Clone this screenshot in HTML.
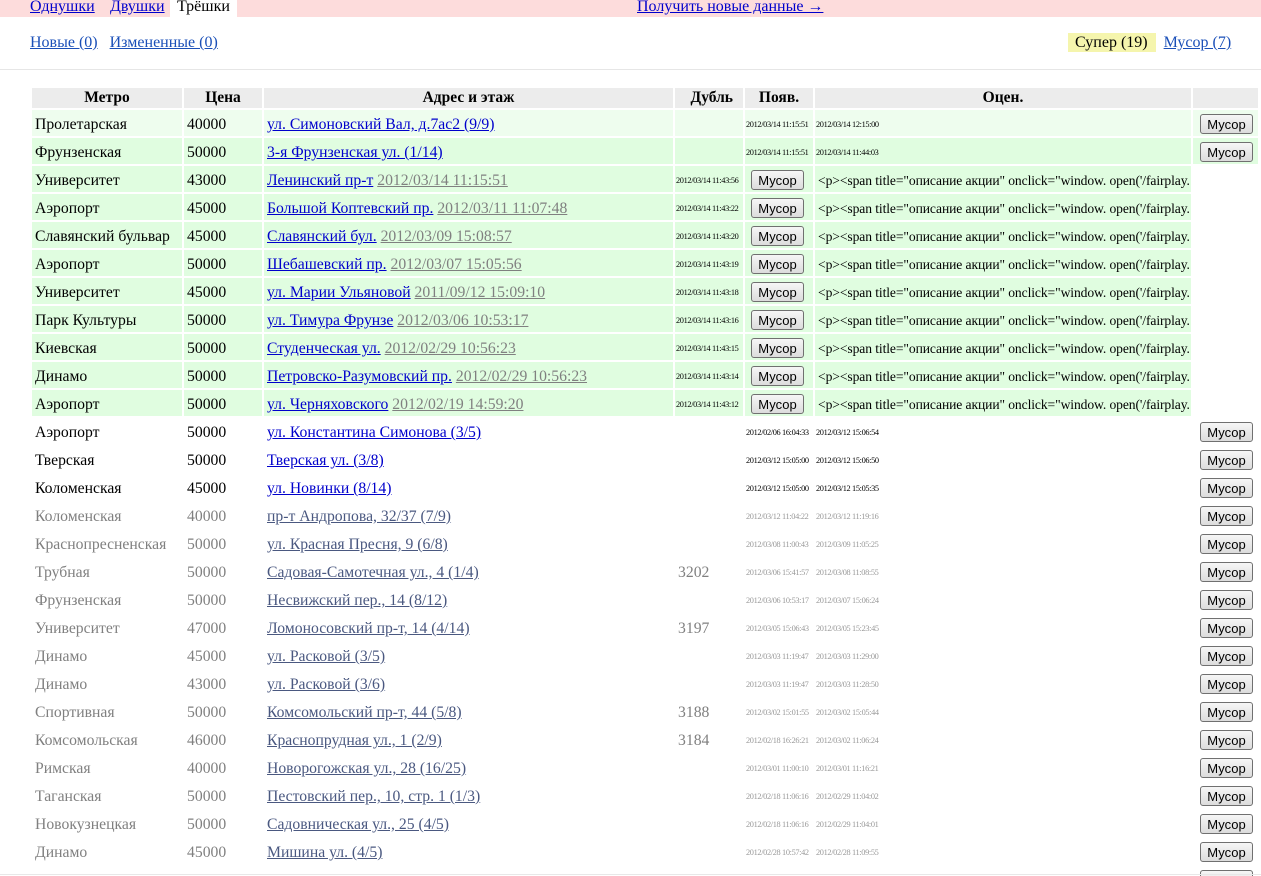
<!DOCTYPE html>
<html><head><meta charset="utf-8">
<style>
*{box-sizing:border-box}
html,body{margin:0;width:1261px;height:876px;overflow:hidden}
body{font-family:"Liberation Serif","DejaVu Serif",serif;font-size:15.7px;color:#000;background:#fff;position:relative}
a{color:#0000cc}
.top{position:absolute;left:0;top:0;width:1261px;height:17px;background:#fddcdc}
.top a,.top span{position:absolute;top:-2px;font-size:16px;line-height:18px}
.tab{background:#fff;height:17px;padding:0 7px}
.sub{position:absolute;top:34px;font-size:16px;line-height:18px}
.sub a{color:#1a4fb8}
.hr{position:absolute;left:0;top:69px;width:1261px;height:1px;background:#e6e6e6}
table{position:absolute;left:30px;top:86px;border-spacing:2px;table-layout:fixed;width:1230px;border-collapse:separate}
th{background:#ececec;height:20px;font-weight:bold;font-size:15.5px;padding:0;line-height:20px}
td{height:26px;padding:4px 3px 0;white-space:nowrap;overflow:hidden;line-height:22px}
tr.g1 td{background:#eefdee}
tr.g td{background:#e0fde0}
tr.g td.n{background:#fff}
.sm{font-size:8.3px;letter-spacing:-0.35px;padding:4px 1px 0}
.dt{color:#808080}
tr.gr td{color:#808080}
tr.gr a{color:#4a5880}
tr.gr .sm{color:#999}
button{font-family:"Liberation Sans",Arial,sans-serif;font-size:13px;height:20px;width:53px;padding:0;border:1px solid #707070;border-radius:3px;background:linear-gradient(#f6f6f6,#dcdcdc);color:#000;vertical-align:middle;position:relative;top:-1px}
td.b{text-align:right;padding:4px 5px 0 0}
td.bb{padding:4px 0 0 6px}
.fs{font-size:13.6px;letter-spacing:-0.1px}
.bl{position:absolute;left:0;top:874px;width:1261px;height:1px;background:#e8e8e8}
</style></head><body>
<div class="top">
<a href="#" style="left:30px">Однушки</a>
<a href="#" style="left:110px">Двушки</a>
<span class="tab" style="left:170px;top:0;height:17px"><span style="position:relative;top:-2px;line-height:18px">Трёшки</span></span>
<a href="#" style="left:637px">Получить новые данные →</a>
</div>
<div class="sub" style="left:30px"><a href="#">Новые (0)</a>&nbsp;&nbsp; <a href="#">Измененные (0)</a></div>
<div class="sub" style="left:1068px;top:34px"><span style="background:#f5f5ad;padding:1px 8px 1px 7px">Супер (19)</span>&nbsp; <a href="#">Мусор (7)</a></div>
<div class="hr"></div>
<table>
<colgroup><col style="width:150px"><col style="width:78px"><col style="width:409px"><col style="width:68px"><col style="width:68px"><col style="width:376px"><col style="width:65px"></colgroup>
<tr><th>Метро</th><th>Цена</th><th>Адрес и этаж</th><th style="text-align:right;padding-right:10px">Дубль</th><th>Появ.</th><th>Оцен.</th><th></th></tr>
<tr class="g1"><td>Пролетарская</td><td>40000</td><td><a href="#">ул. Симоновский Вал, д.7ас2 (9/9)</a></td><td></td><td class="sm">2012/03/14 11:15:51</td><td class="sm">2012/03/14 12:15:00</td><td class="b"><button>Мусор</button></td></tr>
<tr class="g"><td>Фрунзенская</td><td>50000</td><td><a href="#">3-я Фрунзенская ул. (1/14)</a></td><td></td><td class="sm">2012/03/14 11:15:51</td><td class="sm">2012/03/14 11:44:03</td><td class="b"><button>Мусор</button></td></tr>
<tr class="g"><td>Университет</td><td>43000</td><td><a href="#">Ленинский пр-т</a> <a href="#" class="dt">2012/03/14 11:15:51</a></td><td class="sm">2012/03/14 11:43:56</td><td class="bb"><button>Мусор</button></td><td class="fs">&lt;p&gt;&lt;span title="описание акции" onclick="window. open('/fairplay.</td><td class="n"></td></tr>
<tr class="g"><td>Аэропорт</td><td>45000</td><td><a href="#">Большой Коптевский пр.</a> <a href="#" class="dt">2012/03/11 11:07:48</a></td><td class="sm">2012/03/14 11:43:22</td><td class="bb"><button>Мусор</button></td><td class="fs">&lt;p&gt;&lt;span title="описание акции" onclick="window. open('/fairplay.</td><td class="n"></td></tr>
<tr class="g"><td>Славянский бульвар</td><td>45000</td><td><a href="#">Славянский бул.</a> <a href="#" class="dt">2012/03/09 15:08:57</a></td><td class="sm">2012/03/14 11:43:20</td><td class="bb"><button>Мусор</button></td><td class="fs">&lt;p&gt;&lt;span title="описание акции" onclick="window. open('/fairplay.</td><td class="n"></td></tr>
<tr class="g"><td>Аэропорт</td><td>50000</td><td><a href="#">Шебашевский пр.</a> <a href="#" class="dt">2012/03/07 15:05:56</a></td><td class="sm">2012/03/14 11:43:19</td><td class="bb"><button>Мусор</button></td><td class="fs">&lt;p&gt;&lt;span title="описание акции" onclick="window. open('/fairplay.</td><td class="n"></td></tr>
<tr class="g"><td>Университет</td><td>45000</td><td><a href="#">ул. Марии Ульяновой</a> <a href="#" class="dt">2011/09/12 15:09:10</a></td><td class="sm">2012/03/14 11:43:18</td><td class="bb"><button>Мусор</button></td><td class="fs">&lt;p&gt;&lt;span title="описание акции" onclick="window. open('/fairplay.</td><td class="n"></td></tr>
<tr class="g"><td>Парк Культуры</td><td>50000</td><td><a href="#">ул. Тимура Фрунзе</a> <a href="#" class="dt">2012/03/06 10:53:17</a></td><td class="sm">2012/03/14 11:43:16</td><td class="bb"><button>Мусор</button></td><td class="fs">&lt;p&gt;&lt;span title="описание акции" onclick="window. open('/fairplay.</td><td class="n"></td></tr>
<tr class="g"><td>Киевская</td><td>50000</td><td><a href="#">Студенческая ул.</a> <a href="#" class="dt">2012/02/29 10:56:23</a></td><td class="sm">2012/03/14 11:43:15</td><td class="bb"><button>Мусор</button></td><td class="fs">&lt;p&gt;&lt;span title="описание акции" onclick="window. open('/fairplay.</td><td class="n"></td></tr>
<tr class="g"><td>Динамо</td><td>50000</td><td><a href="#">Петровско-Разумовский пр.</a> <a href="#" class="dt">2012/02/29 10:56:23</a></td><td class="sm">2012/03/14 11:43:14</td><td class="bb"><button>Мусор</button></td><td class="fs">&lt;p&gt;&lt;span title="описание акции" onclick="window. open('/fairplay.</td><td class="n"></td></tr>
<tr class="g"><td>Аэропорт</td><td>50000</td><td><a href="#">ул. Черняховского</a> <a href="#" class="dt">2012/02/19 14:59:20</a></td><td class="sm">2012/03/14 11:43:12</td><td class="bb"><button>Мусор</button></td><td class="fs">&lt;p&gt;&lt;span title="описание акции" onclick="window. open('/fairplay.</td><td class="n"></td></tr>
<tr><td>Аэропорт</td><td>50000</td><td><a href="#">ул. Константина Симонова (3/5)</a></td><td></td><td class="sm">2012/02/06 16:04:33</td><td class="sm">2012/03/12 15:06:54</td><td class="b"><button>Мусор</button></td></tr>
<tr><td>Тверская</td><td>50000</td><td><a href="#">Тверская ул. (3/8)</a></td><td></td><td class="sm">2012/03/12 15:05:00</td><td class="sm">2012/03/12 15:06:50</td><td class="b"><button>Мусор</button></td></tr>
<tr><td>Коломенская</td><td>45000</td><td><a href="#">ул. Новинки (8/14)</a></td><td></td><td class="sm">2012/03/12 15:05:00</td><td class="sm">2012/03/12 15:05:35</td><td class="b"><button>Мусор</button></td></tr>
<tr class="gr"><td>Коломенская</td><td>40000</td><td><a href="#">пр-т Андропова, 32/37 (7/9)</a></td><td></td><td class="sm">2012/03/12 11:04:22</td><td class="sm">2012/03/12 11:19:16</td><td class="b"><button>Мусор</button></td></tr>
<tr class="gr"><td>Краснопресненская</td><td>50000</td><td><a href="#">ул. Красная Пресня, 9 (6/8)</a></td><td></td><td class="sm">2012/03/08 11:00:43</td><td class="sm">2012/03/09 11:05:25</td><td class="b"><button>Мусор</button></td></tr>
<tr class="gr"><td>Трубная</td><td>50000</td><td><a href="#">Садовая-Самотечная ул., 4 (1/4)</a></td><td>3202</td><td class="sm">2012/03/06 15:41:57</td><td class="sm">2012/03/08 11:08:55</td><td class="b"><button>Мусор</button></td></tr>
<tr class="gr"><td>Фрунзенская</td><td>50000</td><td><a href="#">Несвижский пер., 14 (8/12)</a></td><td></td><td class="sm">2012/03/06 10:53:17</td><td class="sm">2012/03/07 15:06:24</td><td class="b"><button>Мусор</button></td></tr>
<tr class="gr"><td>Университет</td><td>47000</td><td><a href="#">Ломоносовский пр-т, 14 (4/14)</a></td><td>3197</td><td class="sm">2012/03/05 15:06:43</td><td class="sm">2012/03/05 15:23:45</td><td class="b"><button>Мусор</button></td></tr>
<tr class="gr"><td>Динамо</td><td>45000</td><td><a href="#">ул. Расковой (3/5)</a></td><td></td><td class="sm">2012/03/03 11:19:47</td><td class="sm">2012/03/03 11:29:00</td><td class="b"><button>Мусор</button></td></tr>
<tr class="gr"><td>Динамо</td><td>43000</td><td><a href="#">ул. Расковой (3/6)</a></td><td></td><td class="sm">2012/03/03 11:19:47</td><td class="sm">2012/03/03 11:28:50</td><td class="b"><button>Мусор</button></td></tr>
<tr class="gr"><td>Спортивная</td><td>50000</td><td><a href="#">Комсомольский пр-т, 44 (5/8)</a></td><td>3188</td><td class="sm">2012/03/02 15:01:55</td><td class="sm">2012/03/02 15:05:44</td><td class="b"><button>Мусор</button></td></tr>
<tr class="gr"><td>Комсомольская</td><td>46000</td><td><a href="#">Краснопрудная ул., 1 (2/9)</a></td><td>3184</td><td class="sm">2012/02/18 16:26:21</td><td class="sm">2012/03/02 11:06:24</td><td class="b"><button>Мусор</button></td></tr>
<tr class="gr"><td>Римская</td><td>40000</td><td><a href="#">Новорогожская ул., 28 (16/25)</a></td><td></td><td class="sm">2012/03/01 11:00:10</td><td class="sm">2012/03/01 11:16:21</td><td class="b"><button>Мусор</button></td></tr>
<tr class="gr"><td>Таганская</td><td>50000</td><td><a href="#">Пестовский пер., 10, стр. 1 (1/3)</a></td><td></td><td class="sm">2012/02/18 11:06:16</td><td class="sm">2012/02/29 11:04:02</td><td class="b"><button>Мусор</button></td></tr>
<tr class="gr"><td>Новокузнецкая</td><td>50000</td><td><a href="#">Садовническая ул., 25 (4/5)</a></td><td></td><td class="sm">2012/02/18 11:06:16</td><td class="sm">2012/02/29 11:04:01</td><td class="b"><button>Мусор</button></td></tr>
<tr class="gr"><td>Динамо</td><td>45000</td><td><a href="#">Мишина ул. (4/5)</a></td><td></td><td class="sm">2012/02/28 10:57:42</td><td class="sm">2012/02/28 11:09:55</td><td class="b"><button>Мусор</button></td></tr>
<tr class="gr"><td>&nbsp;</td><td></td><td></td><td></td><td></td><td></td><td class="b"><button>Мусор</button></td></tr>
</table>
<div class="bl"></div>
</body></html>
